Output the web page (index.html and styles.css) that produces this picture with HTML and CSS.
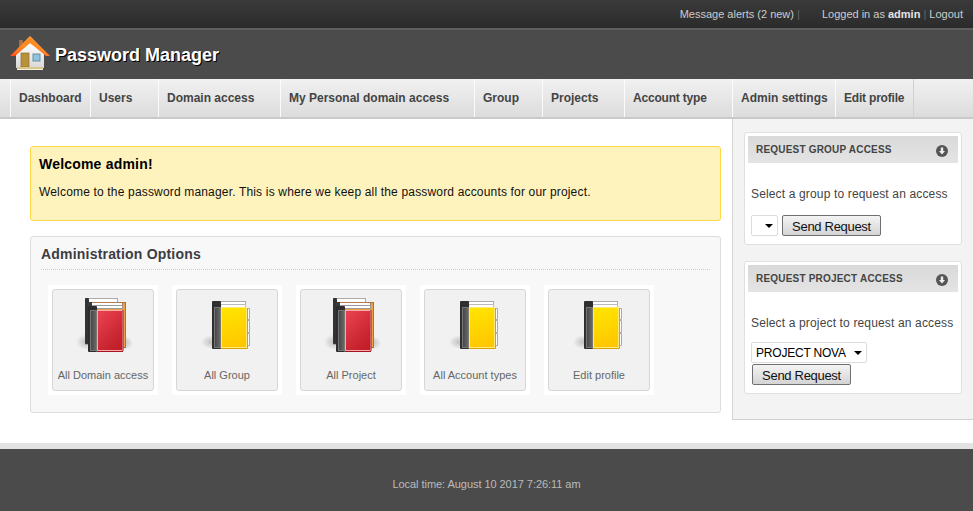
FILE: index.html
```html
<!DOCTYPE html>
<html lang="en">
<head>
<meta charset="utf-8">
<title>Password Manager</title>
<link rel="stylesheet" href="styles.css">
</head>
<body>
<svg class="defs" width="0" height="0" aria-hidden="true">
  <defs>
    <linearGradient id="red" x1="0" y1="0" x2="0.6" y2="1"><stop offset="0" stop-color="#ea4450"/><stop offset="1" stop-color="#c21f2a"/></linearGradient>
    <linearGradient id="yel" x1="0" y1="0" x2="0.2" y2="1"><stop offset="0" stop-color="#ffe600"/><stop offset="1" stop-color="#ffc800"/></linearGradient>
    <linearGradient id="spine" x1="0" y1="0" x2="1" y2="0"><stop offset="0" stop-color="#444"/><stop offset="1" stop-color="#6a6a6a"/></linearGradient>
    <radialGradient id="shade"><stop offset="0" stop-color="#000" stop-opacity=".2"/><stop offset="1" stop-color="#000" stop-opacity="0"/></radialGradient>
    <linearGradient id="roof" x1="0" y1="1" x2="0.5" y2="0"><stop offset="0" stop-color="#ff4a10"/><stop offset="1" stop-color="#ffb347"/></linearGradient>
    <linearGradient id="wall" x1="0" y1="0" x2="0" y2="1"><stop offset="0" stop-color="#fff"/><stop offset="1" stop-color="#d8d8d8"/></linearGradient>
    <symbol id="book-red" viewBox="0 0 70 70">
      <ellipse cx="16" cy="52" rx="10" ry="8" fill="url(#shade)"/>
      <ellipse cx="55" cy="53" rx="8" ry="7" fill="url(#shade)"/>
      <rect x="15.500" y="8.500" width="32" height="46" fill="#fff" stroke="#aaa"/>
      <rect x="15" y="8" width="4" height="46" rx="1" fill="#333"/>
      <rect x="19.500" y="12.500" width="36" height="45" fill="#efa143" stroke="#a9703a"/>
      <rect x="19.500" y="12.500" width="33" height="3" fill="#fff" stroke="#b5784a"/>
      <rect x="18" y="12" width="4" height="46" fill="#3a3a3a"/>
      <rect x="22.500" y="15.500" width="30" height="3" fill="#fff" stroke="#999"/>
      <rect x="18" y="16" width="9" height="46" rx="1" fill="#2e2e2e"/>
      <rect x="20.500" y="20.500" width="6" height="40" fill="url(#spine)" stroke="#777"/>
      <rect x="27.500" y="20.500" width="25" height="40" fill="url(#red)" stroke="#f5aab0"/>
      <path d="M27 61.500H53M53 20V61" stroke="#a8141c" fill="none"/>
    </symbol>
    <symbol id="book-yellow" viewBox="0 0 70 70">
      <ellipse cx="17" cy="52" rx="10" ry="7" fill="url(#shade)"/>
      <rect x="19.500" y="11.500" width="32" height="3" fill="#fff" stroke="#aaa"/>
      <rect x="19.500" y="14.500" width="32" height="3" fill="#fff" stroke="#bbb"/>
      <path d="M53.500 18.500h2v11h-2zM53.500 30.500h2v12h-2zM53.500 43.500h2v12h-2z" fill="#fff" stroke="#aaa"/>
      <rect x="18" y="11" width="9" height="48" rx="1" fill="#2f2f2f"/>
      <rect x="20.500" y="17.500" width="6" height="40" fill="url(#spine)" stroke="#777"/>
      <rect x="27.500" y="17.500" width="25" height="40" fill="url(#yel)" stroke="#ffe97a"/>
      <path d="M27 58.500H53.500V18" stroke="#d5a400" fill="none"/>
    </symbol>
  </defs>
</svg>

<div class="topbar">
  <span class="alerts">Message alerts (2 new) <i class="sep">|</i></span>
  <span class="login">Logged in as <b>admin</b> <i class="sep">|</i> Logout</span>
</div>

<header class="brand">
  <svg class="logo" width="40" height="36" viewBox="0 0 40 36" aria-hidden="true">
    <rect x="9" y="4" width="4" height="9" fill="#a5704e"/>
    <path d="M6 17 20 6 34 17V32H6Z" fill="url(#wall)"/>
    <path d="M0 20 20 0 40 20 36 20 20 7 5 20Z" fill="url(#roof)"/>
    <path d="M20 1 38 19 20 7 3 19Z" fill="#ff8a1e"/>
    <rect x="11" y="17" width="8" height="14" fill="#b8923a" stroke="#8d7030" stroke-width=".7"/>
    <rect x="23" y="18" width="7" height="7" fill="#8cc4df" stroke="#6b8ea0"/>
    <rect x="7" y="31" width="26" height="2" fill="#d9c68a"/>
    <rect x="7" y="33" width="26" height="1" fill="#f4eeda"/>
  </svg>
  <h1 class="site-title">Password Manager</h1>
</header>

<nav class="nav">
  <a class="nav-item w80">Dashboard</a>
  <a class="nav-item w68">Users</a>
  <a class="nav-item w122">Domain access</a>
  <a class="nav-item w194">My Personal domain access</a>
  <a class="nav-item w68">Group</a>
  <a class="nav-item w82">Projects</a>
  <a class="nav-item w108 tight">Account type</a>
  <a class="nav-item w103">Admin settings</a>
  <a class="nav-item w78 tight">Edit profile</a>
</nav>

<div class="content">
  <main class="main">
    <section class="notice">
      <h2>Welcome admin!</h2>
      <p>Welcome to the password manager. This is where we keep all the password accounts for our project.</p>
    </section>
    <section class="panel">
      <h3>Administration Options</h3>
      <div class="tiles">
        <a class="tile"><span class="tile-in"><svg width="70" height="70"><use href="#book-red"/></svg><span class="label">All Domain access</span></span></a>
        <a class="tile"><span class="tile-in"><svg width="70" height="70"><use href="#book-yellow"/></svg><span class="label">All Group</span></span></a>
        <a class="tile"><span class="tile-in"><svg width="70" height="70"><use href="#book-red"/></svg><span class="label">All Project</span></span></a>
        <a class="tile"><span class="tile-in"><svg width="70" height="70"><use href="#book-yellow"/></svg><span class="label">All Account types</span></span></a>
        <a class="tile"><span class="tile-in"><svg width="70" height="70"><use href="#book-yellow"/></svg><span class="label">Edit profile</span></span></a>
      </div>
    </section>
  </main>

  <aside class="side">
    <section class="widget">
      <div class="widget-head"><span>REQUEST GROUP ACCESS</span>
        <svg width="12" height="12" viewBox="0 0 12 12" aria-hidden="true"><circle cx="6" cy="6" r="6" fill="#555"/><path d="M4.800 2.500h2.400v3.500h1.800L6 9.500 3 6h1.800z" fill="#eee"/></svg>
      </div>
      <p class="widget-text">Select a group to request an access</p>
      <div class="controls">
        <span class="sel sel-empty"><select aria-label="Group"><option></option></select></span>
        <button class="btn" type="button">Send Request</button>
      </div>
    </section>
    <section class="widget">
      <div class="widget-head"><span>REQUEST PROJECT ACCESS</span>
        <svg width="12" height="12" viewBox="0 0 12 12" aria-hidden="true"><circle cx="6" cy="6" r="6" fill="#555"/><path d="M4.800 2.500h2.400v3.500h1.800L6 9.500 3 6h1.800z" fill="#eee"/></svg>
      </div>
      <p class="widget-text">Select a project to request an access</p>
      <div class="controls stack">
        <span class="sel sel-project"><select aria-label="Project"><option>PROJECT NOVA</option></select></span>
        <button class="btn btn-under" type="button">Send Request</button>
      </div>
    </section>
  </aside>
</div>

<footer class="footer">Local time: August 10 2017 7:26:11 am</footer>
</body>
</html>
```

FILE: styles.css
```css
* { box-sizing: border-box; }
html, body { margin: 0; padding: 0; }
body {
  width: 973px;
  height: 511px;
  overflow: hidden;
  background: #fff;
  font-family: "Liberation Sans", Arial, sans-serif;
  font-size: 12px;
  color: #333;
}
.defs { position: absolute; }

.topbar {
  height: 30px;
  display: flex;
  justify-content: flex-end;
  align-items: center;
  padding: 0 10px 1px 0;
  background: linear-gradient(#3a3a3a, #2b2b2b);
  border-bottom: 2px solid #5f5f5f;
  color: #ccc;
  font-size: 11px;
}
.topbar b { color: #e4e4e4; }
.sep { font-style: normal; color: #666; }
.login { margin-left: 22px; }

.brand {
  height: 49px;
  display: flex;
  align-items: center;
  gap: 5px;
  padding: 0 0 0 10px;
  background: #4b4b4b;
}
.logo { flex: none; margin-top: -2px; }
.site-title {
  margin: 2px 0 0;
  font-size: 18px;
  font-weight: bold;
  color: #fff;
  text-shadow: 1px 1px 0 #000;
}

.nav {
  height: 40px;
  display: flex;
  padding-left: 10px;
  background: linear-gradient(#f1f1f1, #dcdcdc);
  border-bottom: 2px solid #c9c9c9;
}
.nav-item {
  display: flex;
  align-items: center;
  padding-left: 8px;
  border-left: 1px solid #fbfbfb;
  border-right: 1px solid #d0d0d0;
  color: #444;
  font-weight: bold;
  font-size: 12px;
  margin-right: -1px;
}
.tight { letter-spacing: -.2px; }
.w80 { width: 81px; }
.w68 { width: 69px; }
.w122 { width: 123px; }
.w194 { width: 195px; }
.w82 { width: 83px; }
.w108 { width: 109px; }
.w103 { width: 104px; }
.w78 { width: 79px; }

.content {
  height: 324px;
  display: flex;
  align-items: flex-start;
}
.main {
  flex: 0 0 732px;
  padding: 27px 11px 0 30px;
}
.notice {
  height: 75px;
  padding: 9px 8px;
  background: #fff3bd;
  border: 1px solid #ffd84a;
  border-radius: 3px;
  color: #111;
}
.notice h2 { margin: 0 0 12px; font-size: 14px; line-height: 17px; color: #000; letter-spacing: .2px; }
.notice p { margin: 0; font-size: 12px; line-height: 15px; letter-spacing: .17px; }

.panel {
  height: 177px;
  margin-top: 15px;
  padding: 9px 10px 0;
  background: #f8f8f8;
  border: 1px solid #dedede;
  border-radius: 3px;
}
.panel h3 {
  margin: 0;
  padding-bottom: 6px;
  border-bottom: 1px dotted #ccc;
  font-size: 14px;
  line-height: 17px;
  color: #3c3c44;
  letter-spacing: .2px;
}
.tiles {
  display: flex;
  gap: 14px;
  margin-top: 15px;
  margin-left: 7px;
}
.tile {
  display: block;
  width: 110px;
  height: 110px;
  padding: 4px;
  background: #fff;
}
.tile-in {
  height: 102px;
  display: flex;
  flex-direction: column;
  align-items: center;
  background: #f1f1f1;
  border: 1px solid #d6d6d6;
  border-radius: 3px;
}
.tile-in svg { display: block; margin-left: 4px; flex: none; }
.label {
  margin-top: 8px;
  font-size: 11px;
  line-height: 14px;
  color: #666;
  white-space: nowrap;
}

.side {
  flex: 0 0 241px;
  height: 301px;
  padding: 13px 11px 0;
  background: #f3f3f3;
  border-left: 1px solid #d6d6d6;
  border-bottom: 1px solid #d0d0d0;
}
.widget {
  height: 113px;
  padding: 3px;
  margin-bottom: 16px;
  background: #fff;
  border: 1px solid #e0e0e0;
  border-radius: 3px;
}
.widget + .widget { height: 133px; }
.widget-head {
  height: 27px;
  display: flex;
  justify-content: space-between;
  align-items: center;
  padding: 0 10px 1px 8px;
  background: linear-gradient(#d9d9d9, #e4e4e4);
  color: #444;
  font-size: 10px;
  font-weight: bold;
  letter-spacing: .2px;
}
.widget-head svg { margin-top: 3px; }
.widget-text {
  margin: 24px 0 0 3px;
  font-size: 12px;
  line-height: 15px;
  color: #444;
  letter-spacing: .15px;
  white-space: nowrap;
}
.controls {
  display: flex;
  align-items: center;
  gap: 4px;
  margin: 13px 0 0 3px;
}
.stack { flex-direction: column; align-items: flex-start; gap: 1px; margin-top: 11px; }
.sel {
  position: relative;
  display: block;
  height: 21px;
}
.sel::after {
  content: "";
  position: absolute;
  right: 5px;
  top: 9px;
  border: 4px solid transparent;
  border-top-color: #000;
  border-bottom: 0;
}
.sel select {
  appearance: none;
  -webkit-appearance: none;
  display: block;
  width: 100%;
  height: 100%;
  padding: 1px 0 0 4px;
  background: #fff;
  border: 1px solid #dcdcdc;
  border-radius: 2px;
  font-family: "Liberation Sans", Arial, sans-serif;
  font-size: 12px;
  letter-spacing: -.2px;
  color: #000;
}
.sel-empty { width: 27px; }
.sel-project { width: 116px; }
.btn {
  height: 21px;
  width: 99px;
  padding: 1px 0 0;
  background: linear-gradient(#f4f4f4, #d4d4d4);
  border: 1px solid #707070;
  border-radius: 2px;
  font-family: "Liberation Sans", Arial, sans-serif;
  font-size: 13px;
  letter-spacing: -.3px;
  color: #111;
}
.btn-under { margin-left: 1px; }

.footer {
  height: 68px;
  padding-top: 28px;
  background: #4b4b4b;
  border-top: 6px solid #e2e2e2;
  text-align: center;
  font-size: 11px;
  letter-spacing: -.05px;
  line-height: 14px;
  color: #bbb;
}
```
